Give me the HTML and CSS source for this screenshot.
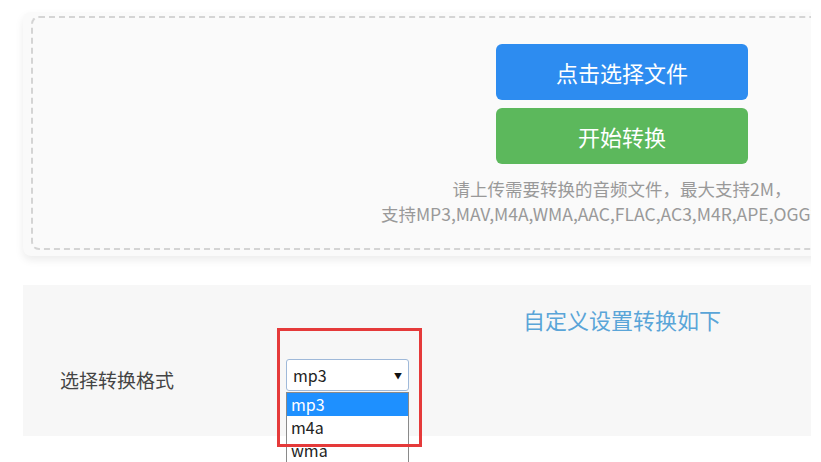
FILE: index.html
```html
<!DOCTYPE html>
<html>
<head>
    <title>音频格式转换</title>
    <link rel="stylesheet" href="styles.css">
</head>
<body>
    <div class="viewport">
        <div class="container">
            <div class="upload-card">
                <div class="upload-area">
                    <button class="btn btn-blue">点击选择文件</button>
                    <button class="btn btn-green">开始转换</button>
                    <p class="hint">请上传需要转换的音频文件，最大支持2M，<br>支持MP3,MAV,M4A,WMA,AAC,FLAC,AC3,M4R,APE,OGG等格式</p>
                </div>
            </div>

            <div class="settings">
                <h3 class="settings-title">自定义设置转换如下</h3>
                <div class="form-row">
                    <label class="form-label">选择转换格式</label>
                    <div class="select-wrap">
                        <div class="select-box">
                            <span>mp3</span>
                            <span class="caret">▼</span>
                        </div>
                        <ul class="select-list">
                            <li class="active">mp3</li>
                            <li>m4a</li>
                            <li>wma</li>
                        </ul>
                        <div class="mark"></div>
                    </div>
                </div>
            </div>
        </div>
    </div>
</body>
</html>
```

FILE: styles.css
```css
html, body {
    margin: 0;
    padding: 0;
    background-color: #fff;
    overflow: hidden;
}

body {
    font-family: "Noto Sans CJK SC", "Noto Sans", sans-serif;
    color: #333;
}

.viewport {
    width: 811px;
    height: 462px;
    overflow: hidden;
    padding: 12px 0 0 23px;
    box-sizing: border-box;
}

.container {
    width: 1198px;
}

.upload-card {
    background-color: #fafafa;
    border-radius: 8px;
    padding: 4px 8px 6px;
    box-shadow: 0 4px 8px rgba(0, 0, 0, 0.08);
}

.upload-area {
    border: 2px dashed #d4d4d4;
    border-radius: 8px;
    padding: 26px 0 22px;
    text-align: center;
}

.btn {
    display: block;
    width: 252px;
    height: 56px;
    margin: 0 auto;
    border: none;
    border-radius: 6px;
    color: #fff;
    font-family: "Noto Sans CJK SC", sans-serif;
    font-size: 22px;
    cursor: pointer;
}

.btn-blue {
    background-color: #2d8cf0;
}

.btn-green {
    background-color: #5cb85c;
    margin-top: 8px;
}

.hint {
    margin: 12px 0 0;
    font-size: 17.5px;
    line-height: 25px;
    color: #999;
    white-space: nowrap;
}

.settings {
    margin-top: 29px;
    height: 151px;
    background-color: #f7f7f7;
    padding-top: 20px;
    box-sizing: border-box;
}

.settings-title {
    margin: 0;
    text-align: center;
    font-size: 22px;
    font-weight: normal;
    line-height: 28px;
    color: #5aa5d8;
}

.form-row {
    display: flex;
    align-items: center;
    margin-top: 26px;
    padding-left: 37px;
}

.form-label {
    width: 226px;
    padding-top: 10px;
    font-size: 19px;
    line-height: 22px;
    color: #444;
}

.select-wrap {
    position: relative;
    width: 123px;
}

.select-box {
    display: flex;
    justify-content: space-between;
    align-items: center;
    height: 32px;
    padding: 0 6px;
    background-color: #fff;
    border: 1px solid #9fb9d9;
    border-radius: 3px;
    box-sizing: border-box;
    font-size: 16px;
    color: #222;
}

.caret {
    font-size: 8px;
    color: #111;
}

.select-list {
    position: absolute;
    top: 33px;
    left: 0;
    width: 123px;
    margin: 0;
    padding: 0;
    list-style: none;
    background-color: #fff;
    border: 1px solid #8a8a8a;
    box-sizing: border-box;
}

.select-list li {
    height: 23px;
    line-height: 23px;
    padding-left: 4px;
    font-size: 16px;
    color: #222;
}

.select-list li.active {
    background-color: #1e90ff;
    color: #fff;
}

.mark {
    position: absolute;
    left: -9px;
    top: -31px;
    width: 145px;
    height: 119px;
    border: 3px solid #e53a3a;
    box-sizing: border-box;
}
```
